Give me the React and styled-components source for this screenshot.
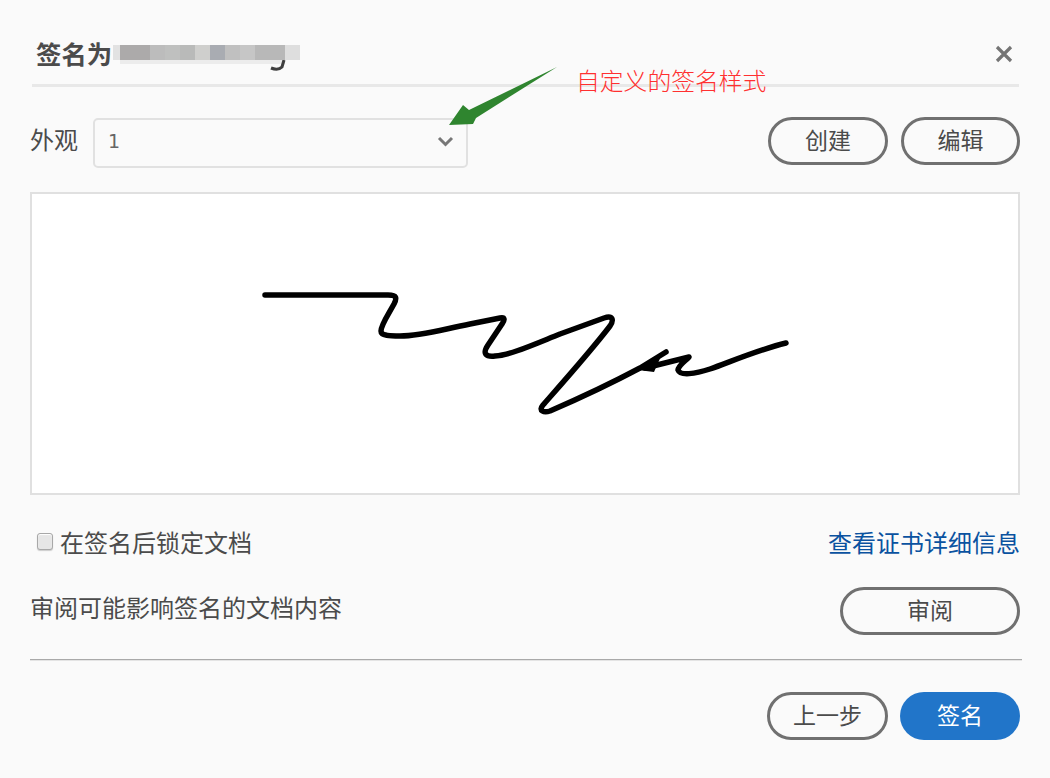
import React from 'react'
import styled, { createGlobalStyle } from 'styled-components'

const GlobalStyle = createGlobalStyle`
    html, body {
        margin: 0;
        padding: 0;
        background: #fafafa;
    }
    body {
        font-family: "Noto Sans CJK SC", "Liberation Sans", sans-serif;
        color: #4b4b4b;
    }
    * { box-sizing: border-box; }
`

const Page = styled.div`
    position: relative;
    width: 1050px;
    height: 778px;
    padding: 0 30px;
    background: #fafafa;
    overflow: hidden;
`

const Header = styled.header`
    display: flex;
    align-items: center;
    justify-content: space-between;
    height: 87px;
    margin: 0 1px 0 2px;
    padding: 24px 6px 0 4px;
    border-bottom: 3px solid #e8e8e8;
`

const TitleWrap = styled.div`
    display: flex;
    align-items: flex-start;
`

const Title = styled.h1`
    margin: 0;
    padding-bottom: 2px;
    font-size: 25.4px;
    line-height: 32px;
    font-weight: 700;
    color: #4b4b4b;
`

const NameMosaic = styled.svg`
    margin: 8px 0 0 1px;
`

const CloseButton = styled.button`
    display: flex;
    padding: 0;
    border: 0;
    background: none;
`

const AppearanceRow = styled.div`
    display: flex;
    align-items: flex-start;
    margin-top: 30px;
`

const Label = styled.label`
    width: 63px;
    font-size: 24px;
    line-height: 44px;
`

const Select = styled.div`
    display: flex;
    align-items: center;
    justify-content: space-between;
    width: 375px;
    height: 50px;
    margin-top: 1px;
    padding: 0 12px 4px 13px;
    border: 2px solid #e1e1e1;
    border-radius: 5px;
    font-family: "DejaVu Sans", sans-serif;
    font-size: 19px;
    color: #666;
`

const ButtonGroup = styled.div`
    display: flex;
    gap: 13px;
    margin-left: auto;
`

const Pill = styled.button`
    width: ${({ width }) => width}px;
    height: 48px;
    padding: 0 0 4px;
    border: ${({ primary }) => primary ? '0' : '3px solid #707070'};
    border-radius: 24px;
    background: ${({ primary }) => primary ? '#2175c9' : 'transparent'};
    color: ${({ primary }) => primary ? '#fff' : '#4b4b4b'};
    font-family: inherit;
    font-size: 23px;
    line-height: 1;
`

const SignatureBox = styled.div`
    height: 303px;
    margin-top: 24px;
    border: 2px solid #e0e0e0;
    background: #fff;
    svg {
        display: block;
        width: 100%;
        height: 100%;
    }
`

const OptionsRow = styled.div`
    display: flex;
    align-items: center;
    justify-content: space-between;
    height: 34px;
    margin-top: 31px;
    padding-bottom: 4px;
    font-size: 24px;
`

const CheckLabel = styled.label`
    display: flex;
    align-items: center;
    gap: 7px;
    padding-left: 7px;
`

const Checkbox = styled.input`
    appearance: none;
    width: 16px;
    height: 17px;
    margin: 0;
    border: 1px solid #a8a8a8;
    border-radius: 3px;
    background: #e6e6e6;
    box-shadow: inset 0 1px 1px #fff, 0 1px 1px #ccc;
`

const DetailLink = styled.a`
    color: #0a52a0;
    text-decoration: none;
`

const ReviewRow = styled.div`
    display: flex;
    align-items: center;
    justify-content: space-between;
    margin-top: 27px;
    font-size: 24px;
`

const ReviewText = styled.span`
    padding-bottom: 10px;
`

const Divider = styled.hr`
    height: 2px;
    margin: 24px -2px 0 0;
    border: 0;
    border-top: 1px solid #a9a9a9;
    border-bottom: 1px solid #e4e4e4;
`

const Footer = styled.footer`
    display: flex;
    justify-content: flex-end;
    gap: 12px;
    margin-top: 31px;
`

const ArrowMark = styled.svg`
    position: absolute;
    left: 445px;
    top: 62px;
`

const Annotation = styled.span`
    position: absolute;
    left: 576px;
    top: 63px;
    font-size: 23.8px;
    line-height: 34px;
    font-weight: 300;
    color: #ff3030;
`

const mosaic = [
    ['#e2e2e2', 7], ['#acaaaa', 30], ['#bcbcbc', 15], ['#bfc0bf', 15], ['#b9bab9', 15],
    ['#cfcfcd', 15], ['#a9acb2', 15], ['#c0c0c0', 15], ['#c6c6c6', 15], ['#b8b8b8', 30], ['#dedede', 15],
]

const BlurredName = () => {
    let x = 0
    const cells = mosaic.map(([color, w], i) => {
        const cell = <rect key={i} x={x} y="0" width={w} height="15" fill={color} />
        x += w
        return cell
    })
    return (
        <NameMosaic width="187" height="26" viewBox="0 0 187 26">
            <rect x="7" y="15" width="165" height="4" fill="#ececec" />
            <path d="M158 23 Q165 26 169 22 L171 15" fill="none" stroke="#3f3f3f" strokeWidth="3" />
            {cells}
        </NameMosaic>
    )
}

const App = () => {
    return (
        <Page>
            <GlobalStyle />
            <Header>
                <TitleWrap>
                    <Title>签名为</Title>
                    <BlurredName />
                </TitleWrap>
                <CloseButton aria-label="关闭">
                    <svg width="18" height="18" viewBox="0 0 18 18">
                        <path d="M2 2 L16 16 M16 2 L2 16" stroke="#757575" strokeWidth="3.2" />
                    </svg>
                </CloseButton>
            </Header>

            <AppearanceRow>
                <Label>外观</Label>
                <Select>
                    1
                    <svg width="17" height="11" viewBox="0 0 17 11">
                        <path d="M2 2 L8.5 8.5 L15 2" fill="none" stroke="#777" strokeWidth="3" />
                    </svg>
                </Select>
                <ButtonGroup>
                    <Pill width={120}>创建</Pill>
                    <Pill width={119}>编辑</Pill>
                </ButtonGroup>
            </AppearanceRow>

            <SignatureBox>
                <svg viewBox="32 194 986 299">
                    <path
                        d="M265 295 L388 295 C397 295 397 298 394 304 C388 315 381 325 381 331 C381 336 390 336 400 336 C420 336 440 330 470 324 L500 318 C505 317 505 320 502 324 L488 345 C482 354 486 357 495 356 C510 355 530 346 560 334 L604 318 C613 315 614 320 610 326 C590 352 565 380 543 405 C538 411 544 413 550 411 C580 398 610 384 640 368 L666 352 M645 368 L689 357 C684 362 678 366 678 370 C680 376 695 374 710 369 C730 362 760 349 786 343"
                        fill="none"
                        stroke="#000"
                        strokeWidth="5.5"
                        strokeLinecap="round"
                        strokeLinejoin="round"
                    />
                    <path d="M638 370 L662 354 L654 372 Z" fill="#000" />
                </svg>
            </SignatureBox>

            <OptionsRow>
                <CheckLabel>
                    <Checkbox type="checkbox" />
                    在签名后锁定文档
                </CheckLabel>
                <DetailLink href="#">查看证书详细信息</DetailLink>
            </OptionsRow>

            <ReviewRow>
                <ReviewText>审阅可能影响签名的文档内容</ReviewText>
                <Pill width={180}>审阅</Pill>
            </ReviewRow>

            <Divider />

            <Footer>
                <Pill width={121}>上一步</Pill>
                <Pill width={120} primary>签名</Pill>
            </Footer>

            <ArrowMark width="114" height="66" viewBox="445 62 114 66">
                <path d="M449 125 L463 105 L469 110 L557 67 L476 118 L473 124 Z" fill="#2f852f" />
            </ArrowMark>
            <Annotation>自定义的签名样式</Annotation>
        </Page>
    )
}

export default App
